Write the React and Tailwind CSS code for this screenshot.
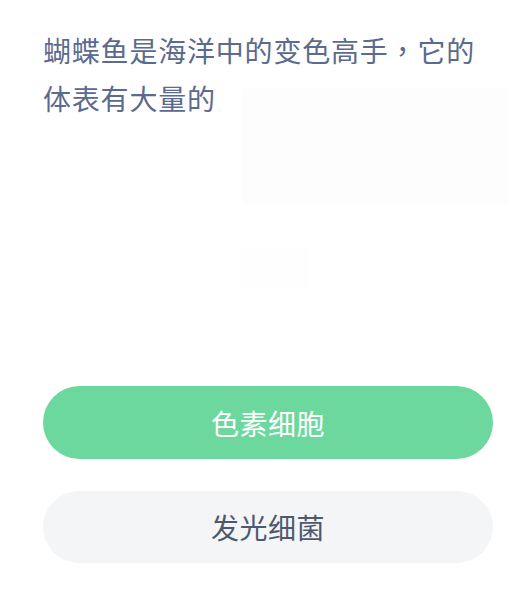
export default function App() {
  return (
    <div
      className="relative min-h-[595px] w-[523px] bg-white pl-[43px] pt-[26px]"
      style={{ fontFamily: '"Noto Sans CJK SC", "Noto Sans", sans-serif' }}
    >
      {/* faint watermark behind the question */}
      <div className="pointer-events-none absolute left-[242px] top-[88px] h-[117px] w-[266px] rounded-md bg-[#fdfdfd]" />
      <div className="pointer-events-none absolute left-[240px] top-[248px] h-[40px] w-[70px] bg-[#fefefe]" />

      <p className="relative w-[450px] text-[28px] leading-[48px] tracking-[0.8px] text-[#5b6a8e]">
        蝴蝶鱼是海洋中的变色高手
        <span style={{ fontFamily: '"Noto Sans CJK TC", sans-serif' }}>，</span>
        它的体表有大量的
      </p>

      <div className="mt-[264px] flex w-[450px] flex-col gap-[32px]">
        <button className="h-[73px] w-full rounded-full bg-[#6cd89e] text-[28px] tracking-[0.5px] text-white">
          色素细胞
        </button>
        <button className="h-[72px] w-full rounded-full bg-[#f4f5f7] text-[28px] tracking-[0.5px] text-[#4f596e]">
          发光细菌
        </button>
      </div>
    </div>
  );
}
